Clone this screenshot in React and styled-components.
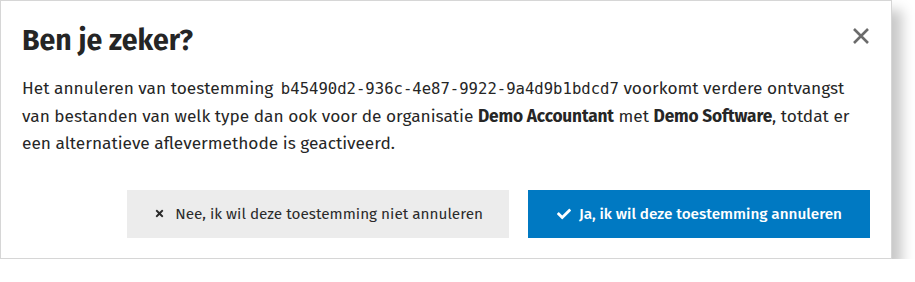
import React from "react";
import styled, { createGlobalStyle } from "styled-components";
import { FaTimes, FaCheck } from "react-icons/fa";

const Global = createGlobalStyle`
  html, body { margin: 0; padding: 0; background: #fff; }
  body { font-family: "Fira Sans", "Noto Sans", "Open Sans", sans-serif; color: #222; }
  * { box-sizing: border-box; }
`;

const Dialog = styled.div`
  width: 892px;
  height: 259px;
  background: #fff;
  border: 1px solid #d6d6d6;
  box-shadow: 10px 10px 12px rgba(0, 0, 0, 0.22);
  padding: 22px 21px 0 21px;
  display: flex;
  flex-direction: column;
`;

const Header = styled.div`
  display: flex;
  justify-content: space-between;
  align-items: flex-start;
`;

const Title = styled.h1`
  margin: 0;
  font-size: 28.5px;
  line-height: 36px;
  font-weight: 700;
  color: #252525;
`;

const CloseButton = styled.button`
  border: 0;
  background: none;
  padding: 0;
  margin: 4px 0 0 0;
  width: 18px;
  height: 18px;
  cursor: pointer;
  display: flex;
  color: #6b6b6b;
`;

const Body = styled.p`
  margin: 16px 0 0 0;
  font-size: 17.3px;
  line-height: 27.5px;
  color: #262626;
`;

const Strong = styled.b`
  font-weight: 700;
  letter-spacing: -0.15px;
`;

const Mono = styled.code`
  font-family: "DejaVu Sans Mono", "Liberation Mono", monospace;
  font-size: 15.6px;
  line-height: 1;
  margin-left: 3px;
`;

const Footer = styled.div`
  display: flex;
  justify-content: flex-end;
  gap: 19px;
  margin-top: 32px;
`;

const Button = styled.button`
  height: 48px;
  border: 0;
  padding: 0 ${(p) => (p.$primary ? "28px 0 29px" : "26px 0 27px")};
  display: flex;
  align-items: center;
  gap: ${(p) => (p.$primary ? "8px" : "10px")};
  font-family: inherit;
  font-size: 15.3px;
  font-weight: ${(p) => (p.$primary ? 500 : 400)};
  background: ${(p) => (p.$primary ? "#0079c2" : "#ececec")};
  color: ${(p) => (p.$primary ? "#fff" : "#2a2a2a")};
  cursor: pointer;
  svg { flex: none; }
`;

export default function App() {
  return (
    <>
      <Global />
      <Dialog>
        <Header>
          <Title>Ben je zeker?</Title>
          <CloseButton aria-label="Sluiten">
            <svg width="18" height="18" viewBox="0 0 18 18">
              <path d="M2 2 L16 16 M16 2 L2 16" stroke="currentColor" strokeWidth="2.6" />
            </svg>
          </CloseButton>
        </Header>
        <Body>
          Het annuleren van toestemming <Mono>b45490d2-936c-4e87-9922-9a4d9b1bdcd7</Mono> voorkomt verdere ontvangst
          van bestanden van welk type dan ook voor de organisatie <Strong>Demo Accountant</Strong> met{" "}
          <Strong>Demo Software</Strong>, totdat er een alternatieve aflevermethode is geactiveerd.
        </Body>
        <Footer>
          <Button>
            <FaTimes size={11} />
            Nee, ik wil deze toestemming niet annuleren
          </Button>
          <Button $primary>
            <FaCheck size={14} />
            Ja, ik wil deze toestemming annuleren
          </Button>
        </Footer>
      </Dialog>
    </>
  );
}
